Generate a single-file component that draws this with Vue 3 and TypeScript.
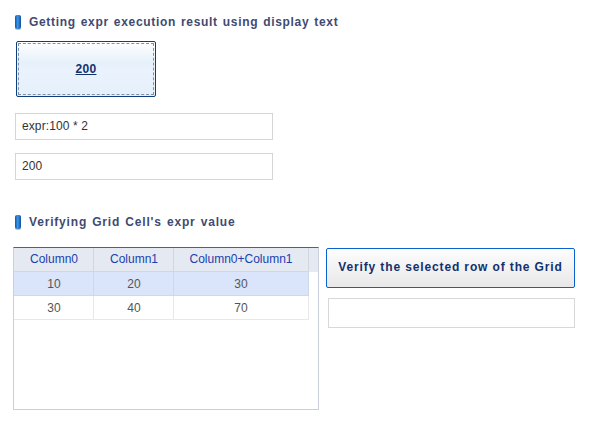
<script setup lang="ts">
const columns = ['Column0', 'Column1', 'Column0+Column1'];
const rows = [
  [10, 20, 30],
  [30, 40, 70],
];
</script>

<template>
  <div class="page">
    <h2 class="title"><span class="bullet"></span>Getting expr execution result using display text</h2>
    <button class="expr-btn"><span class="expr-inner">200</span></button>
    <div class="field first">expr:100 * 2</div>
    <div class="field second">200</div>

    <h2 class="title lower"><span class="bullet"></span>Verifying Grid Cell's expr value</h2>
    <div class="bottom">
      <div class="grid">
        <div class="row head">
          <div v-for="col in columns" :key="col" class="cell">{{ col }}</div>
        </div>
        <div v-for="(row, index) in rows" :key="index" class="row" :class="{ selected: index === 0 }">
          <div v-for="(val, i) in row" :key="i" class="cell">{{ val }}</div>
        </div>
      </div>
      <div class="side">
        <button class="verify-btn">Verify the selected row of the Grid</button>
        <div class="result"></div>
      </div>
    </div>
  </div>
</template>

<style scoped>
.page {
  width: 595px;
  height: 433px;
  box-sizing: border-box;
  padding: 14px 20px 0 13px;
  font-family: "Liberation Sans", Arial, sans-serif;
  font-size: 12px;
  color: #333;
  overflow: hidden;
}

.title {
  display: flex;
  align-items: center;
  gap: 8px;
  height: 16px;
  margin: 0 0 0 2px;
  font-size: 12px;
  font-weight: bold;
  letter-spacing: 0.68px;
  word-spacing: 1px;
  color: #3f4a72;
}

.title.lower {
  margin-top: 34px;
  letter-spacing: 0.82px;
}

.bullet {
  width: 6px;
  height: 14px;
  border-radius: 2px;
  background: linear-gradient(90deg, #0f56a8 0%, #3f95e8 45%, #0c4f9e 100%);
  box-shadow: 0 1px 0 #b9c4cf;
}

.expr-btn {
  display: block;
  width: 140px;
  height: 56px;
  margin: 11px 0 0 3px;
  padding: 1px;
  border: 1px solid #0f3f80;
  border-radius: 2px;
  background: linear-gradient(180deg, #fff 0%, #e6f0fa 38%, #eaf3fd 50%, #e6f0fa 100%);
  font: inherit;
}

.expr-inner {
  display: flex;
  align-items: center;
  justify-content: center;
  height: 100%;
  box-sizing: border-box;
  border: 1px dashed #7f8fa8;
  font-weight: bold;
  letter-spacing: 0.3px;
  color: #12306e;
  text-decoration: underline;
}

.field {
  width: 258px;
  height: 27px;
  box-sizing: border-box;
  margin-left: 2px;
  padding-left: 6px;
  border: 1px solid #d6d6d6;
  line-height: 25px;
  font-size: 12px;
  letter-spacing: 0.1px;
  color: #333;
}

.field.first {
  margin-top: 16px;
}

.field.second {
  margin-top: 13px;
}

.bottom {
  display: flex;
  align-items: flex-start;
  margin-top: 17px;
}

.grid {
  width: 306px;
  height: 163px;
  box-sizing: border-box;
  flex: none;
  border: 1px solid #c9cfdb;
  border-top-color: #3a62b8;
  background: linear-gradient(#e5e9f2, #e5e9f2) top left / 100% 24px no-repeat;
}

.row {
  display: grid;
  grid-template-columns: 80px 80px 135px;
  width: 295px;
  height: 24px;
}

.cell {
  display: flex;
  align-items: center;
  justify-content: center;
  box-sizing: border-box;
  border-right: 1px solid #e8e8e8;
  border-bottom: 1px solid #e8e8e8;
  color: #555;
}

.cell:not(:last-child) {
  padding-left: 1px;
}

.head .cell {
  padding-bottom: 2px;
  border-color: #d2d6df;
  color: #1a3fb0;
}

.selected {
  background: #dae5fb;
}

.selected .cell {
  border-color: #cdd8ea;
}

.side {
  display: flex;
  flex-direction: column;
  align-items: flex-end;
  width: 249px;
  margin-left: 7px;
  margin-top: 1px;
}

.verify-btn {
  width: 249px;
  height: 40px;
  padding: 0 0 2px;
  border: 1px solid #0a62d0;
  border-radius: 2px;
  background: linear-gradient(180deg, #fdfdfd 0%, #e8e8e8 100%);
  font: inherit;
  font-weight: bold;
  letter-spacing: 0.87px;
  color: #12306e;
}

.result {
  width: 247px;
  height: 30px;
  box-sizing: border-box;
  margin-top: 10px;
  border: 1px solid #d8d8d8;
}
</style>
